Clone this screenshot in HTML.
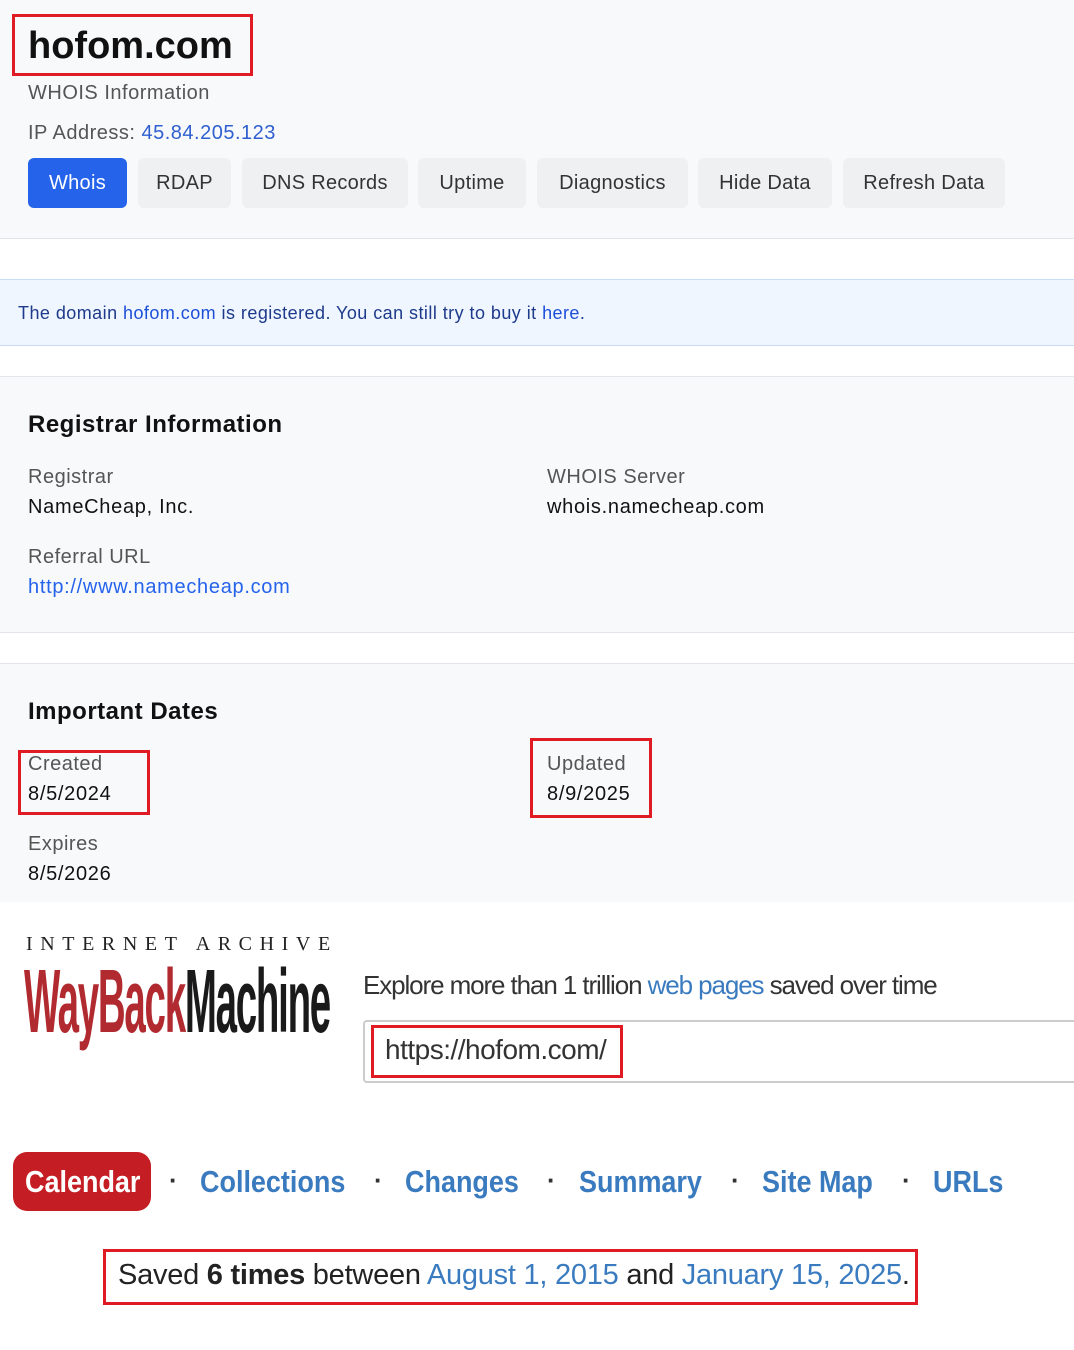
<!DOCTYPE html>
<html><head><meta charset="utf-8"><style>
*{box-sizing:border-box;margin:0;padding:0}
body{width:1074px;height:1350px;background:#fff;font-family:"Liberation Sans",sans-serif;position:relative;overflow:hidden;color:#111}
.abs{position:absolute;white-space:nowrap}
.card{position:absolute;left:-10px;width:1094px;background:#f8f9fb;border:1px solid #e2e5ea;border-radius:8px}
.btn{position:absolute;top:158px;height:50px;background:#eff0f2;border-radius:6px;font-size:20px;color:#333;line-height:50px;text-align:center;letter-spacing:0.3px}
.lbl{font-size:20px;color:#555;letter-spacing:0.5px}
.val{font-size:20px;color:#111;letter-spacing:0.7px}
.red{position:absolute;border:3px solid #e01b24}
.nav{font-weight:bold;font-size:31px;color:#3a7bbf;transform:scaleX(0.87);transform-origin:left top}
.dot{font-size:26px;font-weight:bold;color:#333}
</style></head><body>
<div class="card" style="top:-10px;height:249px"></div>
<div class="abs" style="left:28px;top:25px;font-size:38px;font-weight:bold">hofom.com</div>
<div class="red" style="left:12px;top:14px;width:241px;height:62px"></div>
<div class="abs lbl" style="left:28px;top:82px">WHOIS Information</div>
<div class="abs lbl" style="left:28px;top:122px">IP Address: <span style="color:#2f5fd0">45.84.205.123</span></div>
<div class="btn" style="left:28px;width:99px;background:#2563eb;color:#fff">Whois</div>
<div class="btn" style="left:138px;width:93px">RDAP</div>
<div class="btn" style="left:242px;width:166px">DNS Records</div>
<div class="btn" style="left:418px;width:108px">Uptime</div>
<div class="btn" style="left:537px;width:151px">Diagnostics</div>
<div class="btn" style="left:698px;width:134px">Hide Data</div>
<div class="btn" style="left:843px;width:162px">Refresh Data</div>

<div class="card" style="top:279px;height:67px;background:#eff6ff;border-color:#c9dcf5"></div>
<div class="abs" style="left:18px;top:303px;font-size:18px;letter-spacing:0.45px;color:#1e3a8a">The domain <span style="color:#1d4ed8">hofom.com</span> is registered. You can still try to buy it <span style="color:#1d4ed8">here</span>.</div>

<div class="card" style="top:376px;height:257px"></div>
<div class="abs" style="left:28px;top:411px;font-size:24px;font-weight:bold;letter-spacing:0.5px">Registrar Information</div>
<div class="abs lbl" style="left:28px;top:466px">Registrar</div>
<div class="abs val" style="left:28px;top:496px">NameCheap, Inc.</div>
<div class="abs lbl" style="left:547px;top:466px">WHOIS Server</div>
<div class="abs val" style="left:547px;top:496px">whois.namecheap.com</div>
<div class="abs lbl" style="left:28px;top:546px">Referral URL</div>
<div class="abs val" style="left:28px;top:576px;color:#2563eb">http://www.namecheap.com</div>

<div class="card" style="top:663px;height:250px;border-bottom:none;border-radius:8px 8px 0 0"></div>
<div class="abs" style="left:28px;top:698px;font-size:24px;font-weight:bold;letter-spacing:0.5px">Important Dates</div>
<div class="abs lbl" style="left:28px;top:753px">Created</div>
<div class="abs val" style="left:28px;top:783px">8/5/2024</div>
<div class="red" style="left:18px;top:750px;width:132px;height:65px"></div>
<div class="abs lbl" style="left:547px;top:753px">Updated</div>
<div class="abs val" style="left:547px;top:783px">8/9/2025</div>
<div class="red" style="left:530px;top:738px;width:122px;height:80px"></div>
<div class="abs lbl" style="left:28px;top:833px">Expires</div>
<div class="abs val" style="left:28px;top:863px">8/5/2026</div>
<div class="abs" style="left:0;top:902px;width:1074px;height:448px;background:#fff"></div>

<div class="abs" style="left:26px;top:933px;font-family:'Liberation Serif',serif;font-size:20px;letter-spacing:7.6px;color:#222">INTERNET ARCHIVE</div>
<div class="abs" style="left:24px;top:952px;font-weight:bold;font-size:62px;letter-spacing:-2px;transform:scale(0.62,1.45);transform-origin:top left;line-height:70px"><span style="color:#b02a30">WayBack</span><span style="color:#1a1a1a">Machine</span></div>

<div class="abs" style="left:363px;top:970px;font-size:26px;color:#333;letter-spacing:-1.1px">Explore more than 1 trillion <span style="color:#3a7bbf">web pages</span> saved over time</div>
<div class="abs" style="left:363px;top:1020px;width:720px;height:63px;border:2px solid #ccc;border-right:none;border-radius:4px 0 0 4px;background:#fff"></div>
<div class="abs" style="left:385px;top:1034px;font-size:28px;color:#333;letter-spacing:-0.5px">https://hofom.com/</div>
<div class="red" style="left:371px;top:1025px;width:252px;height:53px"></div>

<div class="abs" style="left:13px;top:1152px;width:138px;height:59px;background:#c41e24;border-radius:14px"></div>
<div class="abs" style="left:25px;top:1164px;color:#fff;font-weight:bold;font-size:31px;transform:scaleX(0.87);transform-origin:left top">Calendar</div>
<div class="abs dot" style="left:169px;top:1165px">·</div>
<div class="abs nav" style="left:200px;top:1164px">Collections</div>
<div class="abs dot" style="left:374px;top:1165px">·</div>
<div class="abs nav" style="left:405px;top:1164px">Changes</div>
<div class="abs dot" style="left:547px;top:1165px">·</div>
<div class="abs nav" style="left:579px;top:1164px">Summary</div>
<div class="abs dot" style="left:731px;top:1165px">·</div>
<div class="abs nav" style="left:762px;top:1164px">Site Map</div>
<div class="abs dot" style="left:902px;top:1165px">·</div>
<div class="abs nav" style="left:933px;top:1164px">URLs</div>

<div class="abs" style="left:118px;top:1259px;font-size:29px;color:#222;letter-spacing:-0.25px">Saved <b>6 times</b> between <span style="color:#3a7bbf">August 1, 2015</span> and <span style="color:#3a7bbf">January 15, 2025</span>.</div>
<div class="red" style="left:103px;top:1249px;width:815px;height:56px"></div>
</body></html>
